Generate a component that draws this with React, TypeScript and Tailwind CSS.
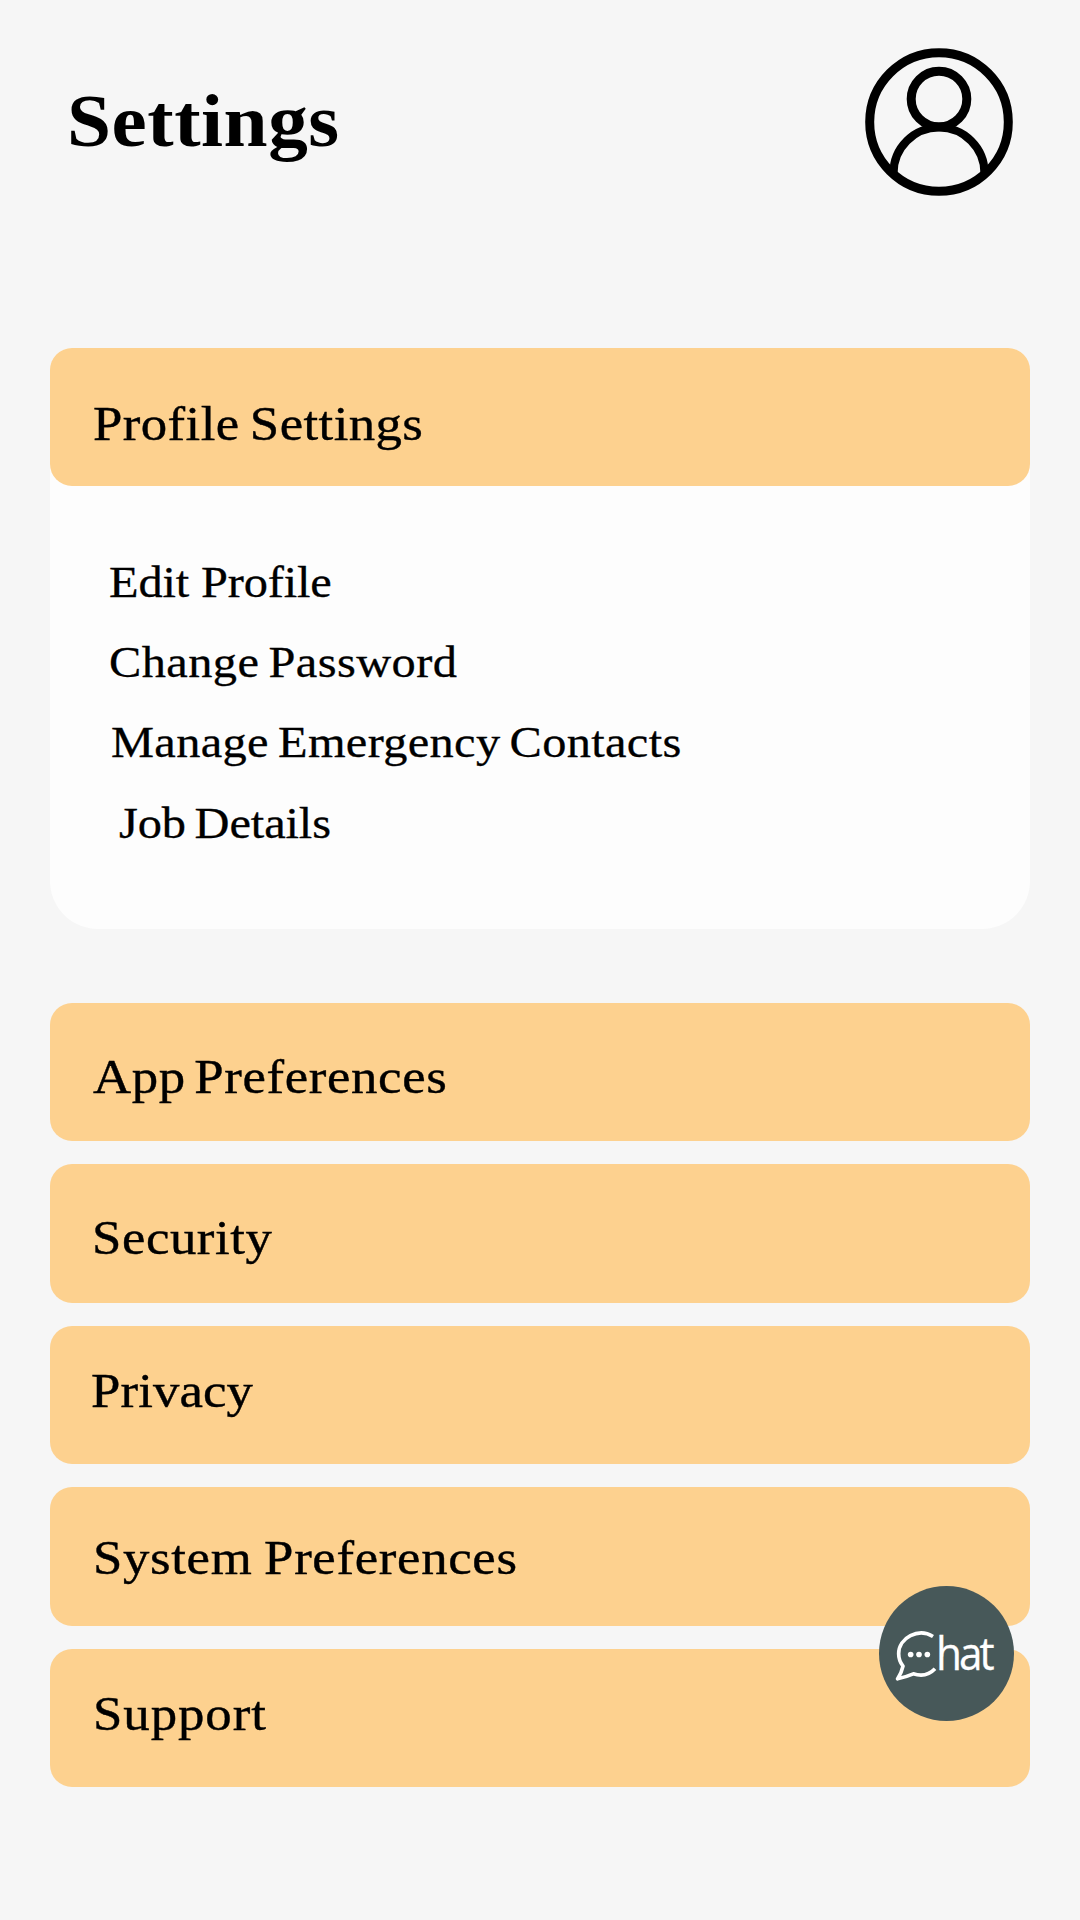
const serif = "font-['Liberation_Serif',serif]";

const profileLinks = [
  { label: 'Edit Profile', style: 'pl-[59.3px] tracking-[-0.15px]' },
  { label: 'Change Password', style: 'pl-[59.3px] tracking-[0.37px] [word-spacing:-3px]' },
  { label: 'Manage Emergency Contacts', style: 'pl-[61.8px] tracking-[0.3px] [word-spacing:-3px]' },
  { label: 'Job Details', style: 'pl-[69.8px] tracking-[-0.1px] [word-spacing:-3px]' },
];

const sections = [
  { label: 'App Preferences', style: 'pt-[50px] pl-[43px] tracking-[0.58px] [word-spacing:-5px]' },
  { label: 'Security', style: 'pt-[49.5px] pl-[42.7px] tracking-[0.5px]' },
  { label: 'Privacy', style: 'pt-[41px] pl-[41px] tracking-[0.1px]' },
  { label: 'System Preferences', style: 'pt-[47px] pl-[43.7px] tracking-[0.6px] [word-spacing:-2px]' },
  { label: 'Support', style: 'pt-[41.3px] pl-[43.7px] tracking-[0.85px]' },
];

function SectionButton({ label, style }: { label: string; style: string }) {
  return (
    <button
      className={`block h-[138.4px] w-full shrink-0 rounded-[22px] bg-[#fdd18f] text-left align-top ${style}`}
    >
      <span className="block h-full origin-left scale-x-[1.1] text-[48px] leading-[48px] whitespace-nowrap [-webkit-text-stroke:0.4px_black]">
        {label}
      </span>
    </button>
  );
}

function Avatar() {
  return (
    <svg className="h-[148px] w-[148px]" viewBox="0 0 148 148" fill="none" stroke="black">
      <circle cx="74" cy="74" r="69.3" strokeWidth="9" />
      <circle cx="74" cy="51" r="27.8" strokeWidth="9" />
      <path d="M28.5 127V125A45.5 45.5 0 0 1 119.5 125V127" strokeWidth="8.2" />
    </svg>
  );
}

function ChatButton() {
  return (
    <button
      aria-label="Chat"
      className="absolute top-[1585.8px] left-[879px] flex h-[134.8px] w-[134.8px] rounded-full bg-[#475859] pt-[44px] pl-[16.3px] text-white"
    >
      <svg className="h-[52px] w-[42px] shrink-0" viewBox="105 179.5 126 156" fill="none">
        <path
          d="M219 199C176 172 116 202 116 251Q116 272 129 288Q125 307 113 326Q136 321 160 311Q198 324 225 296"
          stroke="white"
          strokeWidth="11"
          strokeLinejoin="round"
        />
        <g fill="white">
          <circle cx="152" cy="253" r="8.5" />
          <circle cx="177" cy="253" r="8.5" />
          <circle cx="202" cy="253" r="8.5" />
        </g>
      </svg>
      <span className="-ml-[1px] origin-left scale-x-[0.94] pt-[0.5px] font-['Open_Sans',sans-serif] text-[45px] leading-[46px] tracking-[-3.2px] [-webkit-text-stroke:0.3px_white]">
        hat
      </span>
    </button>
  );
}

export default function App() {
  return (
    <main className={`relative flex h-[1920px] w-[1080px] flex-col overflow-hidden bg-[#f6f6f6] px-[49.7px] text-black ${serif}`}>
      <header className="flex h-[348px] shrink-0 items-start justify-between pt-[48.3px] pr-[17.8px] pl-[17px]">
        <h1 className="origin-left scale-x-[1.07] pt-[34.8px] text-[74px] leading-[76px] font-bold tracking-[0.5px]">
          Settings
        </h1>
        <Avatar />
      </header>

      <section className="h-[580.7px] shrink-0 rounded-t-[22px] rounded-b-[48px] bg-[#fdfdfd]">
        <SectionButton label="Profile Settings" style="pt-[52px] pl-[43px] tracking-[0.37px] [word-spacing:-3px]" />
        <ul className="pt-[56.5px]">
          {profileLinks.map((link) => (
            <li key={link.label} className={`h-[80.3px] text-[44px] leading-[80px] whitespace-nowrap ${link.style}`}>
              <span className="block origin-left scale-x-[1.1] [-webkit-text-stroke:0.3px_black]">{link.label}</span>
            </li>
          ))}
        </ul>
      </section>

      <nav className="flex flex-col gap-[23.1px] pt-[74.3px]">
        {sections.map((section) => (
          <SectionButton key={section.label} label={section.label} style={section.style} />
        ))}
      </nav>

      <ChatButton />
    </main>
  );
}
